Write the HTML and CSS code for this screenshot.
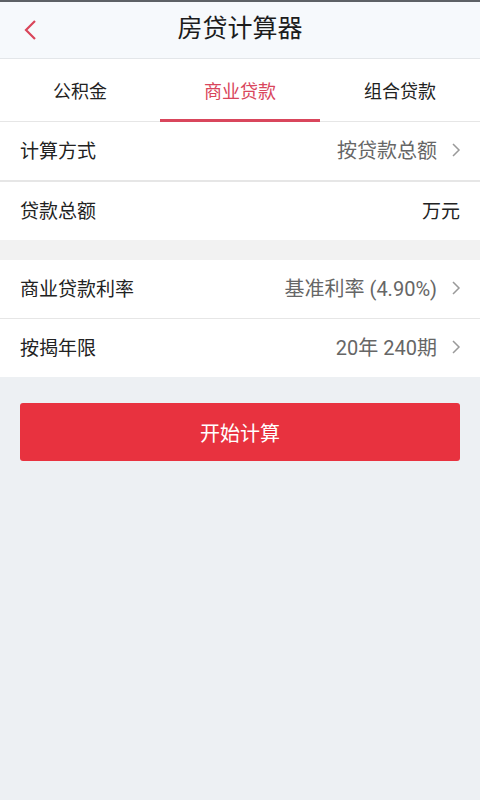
FILE: index.html
```html
<!DOCTYPE html>
<html lang="zh-CN">
<head>
<meta charset="utf-8">
<title>房贷计算器</title>
<link rel="stylesheet" href="styles.css">
</head>
<body>
<div class="app">
  <header class="topbar">
    <div class="back">
      <svg width="16" height="22" viewBox="0 0 16 22"><polyline points="12,2 3,11 12,20" fill="none" stroke="#d9455a" stroke-width="2.2" stroke-linejoin="miter"/></svg>
    </div>
    <h1 class="title">房贷计算器</h1>
  </header>
  <nav class="tabs">
    <div class="tab">公积金</div>
    <div class="tab active">商业贷款</div>
    <div class="tab">组合贷款</div>
  </nav>
  <section class="group">
    <div class="row row-thick">
      <span class="label">计算方式</span>
      <span class="value">按贷款总额<svg class="chev" width="10" height="16" viewBox="0 0 10 16"><polyline points="2,2 8,8 2,14" fill="none" stroke="#9a9a9a" stroke-width="1.5"/></svg></span>
    </div>
    <div class="row">
      <span class="label">贷款总额</span>
      <span class="value dark">万元</span>
    </div>
  </section>
  <div class="spacer"></div>
  <section class="group">
    <div class="row row-thin">
      <span class="label">商业贷款利率</span>
      <span class="value">基准利率 (4.90%)<svg class="chev" width="10" height="16" viewBox="0 0 10 16"><polyline points="2,2 8,8 2,14" fill="none" stroke="#9a9a9a" stroke-width="1.5"/></svg></span>
    </div>
    <div class="row">
      <span class="label">按揭年限</span>
      <span class="value">20年 240期<svg class="chev" width="10" height="16" viewBox="0 0 10 16"><polyline points="2,2 8,8 2,14" fill="none" stroke="#9a9a9a" stroke-width="1.5"/></svg></span>
    </div>
  </section>
  <div class="actions">
    <button class="btn">开始计算</button>
  </div>
</div>
</body>
</html>
```
FILE: styles.css
```css
* { box-sizing: border-box; }
html, body { margin: 0; padding: 0; }
body {
  background: #edf0f3;
  font-family: Roboto, "Noto Sans CJK SC", "Noto Sans", sans-serif;
  color: #222;
  width: 480px;
  min-height: 800px;
}
.app { display: flex; flex-direction: column; }
.topbar {
  height: 59px;
  background: #f6f9fc;
  border-top: 2px solid #5d6166;
  border-bottom: 1px solid #e3e6e9;
  display: flex;
  align-items: center;
  justify-content: center;
  position: relative;
}
.back {
  position: absolute;
  left: 23px;
  top: 17px;
  display: flex;
}
.title {
  margin: 0 0 3px;
  font-size: 25px;
  font-weight: 400;
  color: #1c1c1c;
  line-height: 1;
}
.tabs {
  display: flex;
  background: #fff;
  height: 63px;
  border-bottom: 1px solid #e6e6e6;
}
.tab {
  flex: 1;
  display: flex;
  align-items: center;
  justify-content: center;
  font-size: 18px;
  color: #222;
  border-bottom: 3px solid transparent;
  margin-bottom: -1px;
  padding-top: 2px;
}
.tab.active {
  color: #d9465c;
  border-bottom-color: #d9465c;
}
.group { background: #fff; }
.row {
  height: 58px;
  display: flex;
  align-items: center;
  justify-content: space-between;
  padding: 0 20px 3px;
}
.row-thick { border-bottom: 2px solid #e6e6e6; height: 60px; }
.row-thin { border-bottom: 1px solid #e6e6e6; height: 59px; }
.label { font-size: 19px; color: #222; }
.value {
  font-size: 20px;
  color: #666;
  display: flex;
  align-items: center;
}
.value.dark { color: #222; font-size: 19px; }
.chev { margin-left: 14px; margin-right: -1px; }
.spacer { height: 20px; background: #f2f2f2; }
.actions { padding: 26px 20px 0; }
.btn {
  width: 100%;
  height: 58px;
  border: none;
  border-radius: 3px;
  background: #e8323f;
  color: #fff;
  font-family: inherit;
  font-size: 20px;
  display: flex;
  align-items: center;
  justify-content: center;
}
```
